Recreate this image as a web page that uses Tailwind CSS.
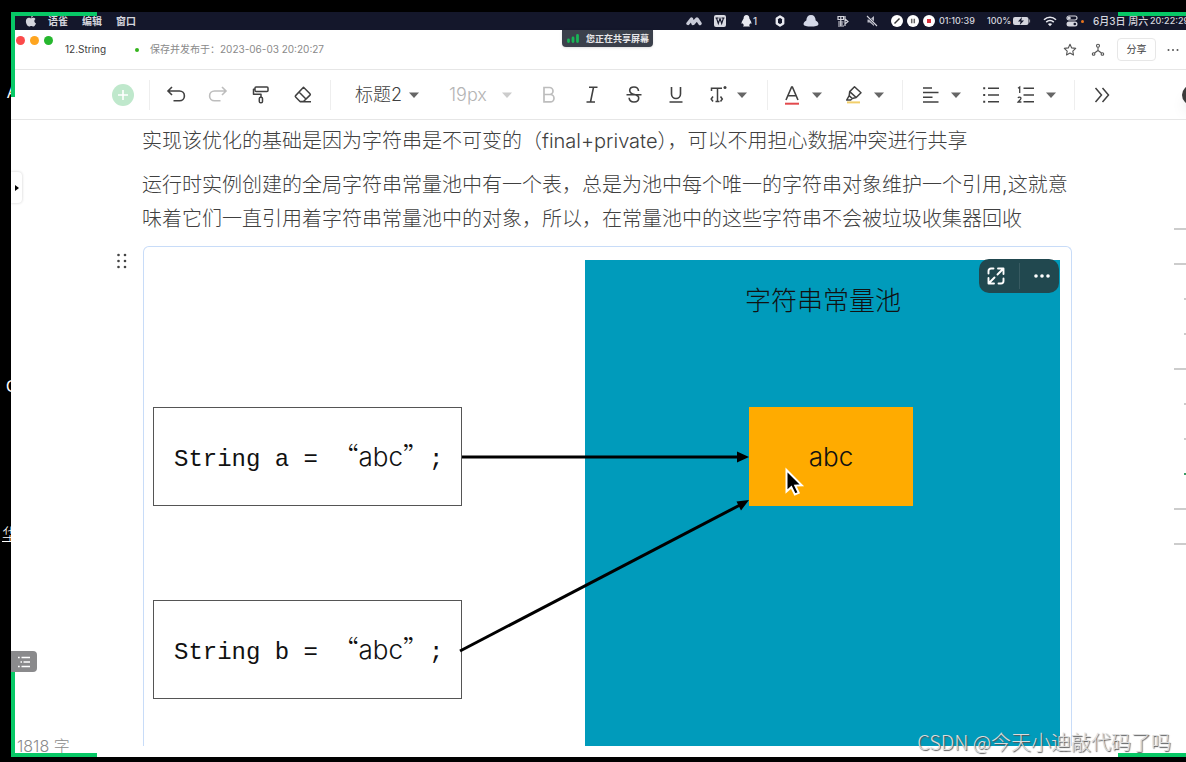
<!DOCTYPE html>
<html lang="zh-CN">
<head>
<meta charset="utf-8">
<title>12.String</title>
<script src="https://cdn.jsdelivr.net/npm/@tailwindcss/browser@4"></script>
</head>
<body class="relative flex h-screen flex-col overflow-hidden bg-black pt-3 pr-0 pb-[5px] pl-[11px] font-['Inter','Noto_Sans_CJK_SC',sans-serif] text-[#404040]">

<!-- page behind the shared screen -->
<div class="absolute inset-y-0 left-0 w-[11px] overflow-hidden whitespace-nowrap font-['Liberation_Sans','Noto_Sans_CJK_SC',sans-serif] text-base leading-4 text-white">
  <span class="absolute top-[85px] left-[7px]">A</span>
  <span class="absolute top-[379px] left-[6px]">C</span>
  <a href="#" class="absolute top-[527px] left-[2px] text-base leading-4 font-light underline">华</a>
</div>

<!-- menu bar -->
<header class="flex h-[18px] shrink-0 items-center overflow-hidden bg-[#14172b] pl-3.5 text-[10px] font-semibold whitespace-nowrap text-[#d4d5dd]">
  <svg class="size-3 shrink-0" viewBox="0 0 12 12" fill="currentColor"><path d="M8 .5C7.900 1.800 7 2.700 5.900 2.700 5.900 1.500 6.800.7 8 .5zM6 3.300c.6 0 1.200-.5 2.300-.5.9 0 1.700.5 2.200 1.200C8.700 5 9 7.600 11 8.400c-.6 1.500-1.500 3-2.600 3-.8 0-1.200-.5-2.100-.5s-1.300.5-2.100.5C2.500 11.400.9 8.700.9 6.200c0-2.200 1.400-3.400 2.900-3.400 1 0 1.600.5 2.200.5z"/></svg>
  <nav class="ml-[11px] flex gap-3.5"><a href="#" class="w-5">语雀</a><a href="#" class="w-5">编辑</a><a href="#" class="w-5">窗口</a></nav>
  <div class="ml-auto flex w-[500px] shrink-0 items-center">
    <svg class="h-3 w-4 shrink-0" viewBox="0 0 16 12"><path d="M2 8.500 5.500 4 7 8.500 11 4l3 4.500" fill="none" stroke="#c9cbd8" stroke-width="3.400" stroke-linecap="round" stroke-linejoin="round"/></svg>
    <svg class="ml-3 size-3 shrink-0" viewBox="0 0 12 12"><rect width="12" height="12" rx="2" fill="#d9dae2"/><path d="M1.500 3h3M7.500 3h3M2.500 3l1.800 5.500L6 3.500l1.700 5L9.500 3" fill="none" stroke="#14172b" stroke-width="1.100"/></svg>
    <svg class="ml-[15px] h-3 w-[11px] shrink-0" viewBox="0 0 11 12" fill="#e8e9f0"><path d="M5.500 0C3.500 0 2.600 1.500 2.600 3.500 1.500 5.500.3 7 .6 9l1.200-.8c.2.800.6 1.300 1.100 1.800L2 11.500h7L8.100 10c.5-.5.900-1 1.100-1.800l1.200.8c.3-2-.9-3.500-2-5.500C8.400 1.500 7.500 0 5.500 0z"/></svg>
    <span class="w-[22px] shrink-0 pl-px font-medium">1</span>
    <svg class="size-3 shrink-0" viewBox="0 0 12 12"><path d="M6 1.500 9.200 3.500v5L6 10.500 2.800 8.500v-5z" fill="#14172b" stroke="#e8e9f0" stroke-width="2.400" stroke-linejoin="round"/></svg>
    <svg class="ml-[17px] h-3 w-4 shrink-0" viewBox="0 0 16 12"><path d="M8 0c3 0 4.500 2 4.700 5.500C15 7 15.600 8 15.400 9.500 15 11 12 11.500 8 11.500S1 11 .6 9.500C.4 8 1 7 3.300 5.500 3.500 2 5 0 8 0z" fill="#d4d8e8"/></svg>
    <svg class="ml-[18px] size-3 shrink-0" viewBox="0 0 12 12" fill="none" stroke="#d5d6de" stroke-width="1.200"><path d="M1 1.500h5.500v3H1zM1 7h5.500M1 9h5M1 11h6M3.800 1.500V11M8 1v10M8 4l3 2.500L8 9"/></svg>
    <svg class="ml-[17px] size-3 shrink-0" viewBox="0 0 12 12"><path d="M1.500 4.500h2.300L8 1v10L3.800 7.500H1.500z" fill="#b9bac6"/><path d="M1 1l10 10" stroke="#14172b" stroke-width="2.400"/><path d="M1 1l10 10" stroke="#d5d6de" stroke-width="1.100"/></svg>
    <svg class="ml-[13px] size-3 shrink-0" viewBox="0 0 12 12"><circle cx="6" cy="6" r="6" fill="#fff"/><path d="M3.500 8.500l5-5" stroke="#333" stroke-width="1.400"/></svg>
    <svg class="ml-1 size-3 shrink-0" viewBox="0 0 12 12"><circle cx="6" cy="6" r="6" fill="#fff"/><path d="M4.700 3.700v4.600M7.300 3.700v4.600" stroke="#666" stroke-width="1.500"/></svg>
    <svg class="ml-1 size-3 shrink-0" viewBox="0 0 12 12"><circle cx="6" cy="6" r="6" fill="#fff"/><rect x="4" y="4" width="4" height="4" fill="#d8303c"/></svg>
    <span class="ml-1 w-12 shrink-0 text-[9px] font-medium">01:10:39</span>
    <span class="w-[26px] shrink-0 text-[9px] font-medium">100%</span>
    <svg class="h-2 w-[18px] shrink-0" viewBox="0 0 18 8"><rect width="15.500" height="8" rx="2" fill="#d5d6de"/><path d="M16.500 2.500v3" stroke="#8d8f9c" stroke-width="1.200"/><path d="M9 0 5 4.500h2.500L6.800 8 11 3.500H8.300z" fill="#14172b"/></svg>
    <svg class="ml-3 h-3 w-3.5 shrink-0" viewBox="0 0 14 12" fill="none" stroke="#e8e9f0" stroke-width="1.600"><path d="M1 4.800c3.500-3.400 8.500-3.400 12 0M3.200 7.100c2.200-2 5.400-2 7.600 0"/><path d="M7 11.200 4.900 9c1.200-1 3-1 4.200 0z" fill="#e8e9f0" stroke="none"/></svg>
    <svg class="ml-[9px] h-3 w-3 shrink-0" viewBox="0 0 12 12"><rect x="1" y="1" width="10" height="4" rx="2" fill="none" stroke="#d5d6de" stroke-width="1.200"/><circle cx="3.200" cy="3" r="1.600" fill="#d5d6de"/><rect x=".5" y="6.500" width="11" height="5" rx="2.500" fill="#d5d6de"/><circle cx="8.800" cy="9" r="1.300" fill="#14172b"/></svg>
    <span class="ml-[3px] size-[3px] shrink-0 rounded-full bg-[#e8741c]"></span>
    <span class="ml-[9px] w-[57px] shrink-0 font-medium">6月3日 周六</span>
    <span class="shrink-0 text-[9px] font-medium">20:22:29</span>
  </div>
</header>

<!-- sharing notice -->
<div class="absolute top-[30px] left-[562px] flex h-[17px] w-[91px] items-center gap-[7px] rounded-b-sm bg-[#3b404b] pl-[5px] text-[9px] font-semibold whitespace-nowrap text-[#e6e6e8] shadow">
  <svg class="h-[9px] w-3" viewBox="0 0 12 9" stroke="#18b556" stroke-width="2.800" stroke-linecap="round"><path d="M1.500 6v1.500M6 4v3.500M10.500 1.500v6"/></svg>
  您正在共享屏幕
</div>

<!-- title bar -->
<div class="flex h-10 shrink-0 items-center border-b border-[#e6e6e6] bg-white pl-[5px] text-[10px] whitespace-nowrap">
  <div class="mb-[19px] flex gap-[5px]">
    <span class="size-[9px] rounded-full bg-[#fb4a4a]"></span>
    <span class="size-[9px] rounded-full bg-[#fea520]"></span>
    <span class="size-[9px] rounded-full bg-[#26b72e]"></span>
  </div>
  <h1 class="ml-3 w-[70px]">12.String</h1>
  <span class="size-1 rounded-full bg-[#35b41d]"></span>
  <span class="ml-[11px] text-[#8a8a8a]">保存并发布于：2023-06-03 20:20:27</span>
  <div class="ml-auto flex items-center pr-[7px]">
    <button aria-label="收藏"><svg class="size-3.5" viewBox="0 0 14 14" fill="none" stroke="#555" stroke-width="1.100" stroke-linejoin="round"><path d="M7 1.300l1.700 3.600 4 .5-2.900 2.700.7 3.900L7 10.100 3.500 12l.7-3.900L1.300 5.400l4-.5z"/></svg></button>
    <button aria-label="协作" class="ml-3.5"><svg class="size-3.5" viewBox="0 0 14 14" fill="none" stroke="#555" stroke-width="1.100"><circle cx="7" cy="2.800" r="1.500"/><circle cx="2.600" cy="11" r="1.300"/><circle cx="11.400" cy="11" r="1.300"/><path d="M7 4.300v3.200M3.500 10 7 7.500l3.500 2.500"/></svg></button>
    <button class="ml-3 h-[23px] w-[39px] rounded-sm border border-[#e7e7e7]">分享</button>
    <button aria-label="更多" class="ml-[11px]"><svg class="h-3 w-3" viewBox="0 0 12 12" fill="#555"><circle cx="1.500" cy="6" r="1"/><circle cx="6" cy="6" r="1"/><circle cx="10.500" cy="6" r="1"/></svg></button>
  </div>
</div>

<!-- editing toolbar -->
<div class="flex h-[50px] shrink-0 items-center overflow-hidden border-b border-[#e6e6e6] bg-white pl-[101px] whitespace-nowrap text-[#404040]">
  <button aria-label="插入" class="flex size-[22px] shrink-0 items-center justify-center rounded-full bg-[#bfe8cc]"><svg class="size-3" viewBox="0 0 12 12" stroke="#fff" stroke-width="1.600"><path d="M6 1v10M1 6h10"/></svg></button>
  <span class="ml-[15px] h-[30px] w-px bg-[#eee]"></span>
  <button aria-label="撤销" class="ml-3.5"><svg class="size-6" viewBox="0 0 24 24" fill="none" stroke="currentColor" stroke-width="1.600"><path d="M8 4 4 8l4 4M4 8h11.500a4.700 4.700 0 0 1 0 9.800H9.500"/></svg></button>
  <button aria-label="重做" class="ml-[18px] text-[#bdbdbd]"><svg class="size-6" viewBox="0 0 24 24" fill="none" stroke="currentColor" stroke-width="1.600"><path d="M16 4l4 4-4 4M20 8H8.500a4.700 4.700 0 0 0 0 9.800h6"/></svg></button>
  <button aria-label="格式刷" class="ml-[19px]"><svg class="size-6" viewBox="0 0 24 24" fill="none" stroke="currentColor" stroke-width="1.500" stroke-linejoin="round"><rect x="6" y="4" width="13" height="4.600" rx="1"/><path d="M6 6.300H4.500v4.900H12v3"/><rect x="10.300" y="14.200" width="3.200" height="5.600" rx="1.400"/></svg></button>
  <button aria-label="清除格式" class="ml-[18px]"><svg class="size-6" viewBox="0 0 24 24" fill="none" stroke="currentColor" stroke-width="1.500" stroke-linejoin="round"><path d="M12.500 4.200 19 10.700a1 1 0 0 1 0 1.400L12.500 18.500H9L4.600 14a1 1 0 0 1 0-1.400zM8 9l6.700 6.700M9 18.700h11"/></svg></button>
  <span class="ml-[15px] h-[30px] w-px bg-[#eee]"></span>
  <label class="ml-6 flex items-center"><select aria-label="正文样式" class="w-[54px] appearance-none text-[18px] leading-6 font-light"><option>标题2</option></select><svg class="h-1.5 w-2.5" viewBox="0 0 10 6" fill="#666"><path d="M0 .5h10L5 6z"/></svg></label>
  <label class="ml-[30px] flex items-center text-[#b4b4b4]"><select aria-label="字号" class="w-[53px] appearance-none text-[18px] leading-6 font-light"><option>19px</option></select><svg class="h-1.5 w-2.5" viewBox="0 0 10 6" fill="#ccc"><path d="M0 .5h10L5 6z"/></svg></label>
  <button aria-label="粗体" class="ml-[25px] text-[#bdbdbd]"><svg class="size-6" viewBox="0 0 24 24" fill="none" stroke="currentColor" stroke-width="1.700"><path d="M7 4.500h5.500a3.500 3.500 0 0 1 0 7H7zM7 11.500h6.300a3.700 3.700 0 0 1 0 7.400H7z"/></svg></button>
  <button aria-label="斜体" class="ml-[19px]"><svg class="size-6" viewBox="0 0 24 24" fill="none" stroke="currentColor" stroke-width="1.600"><path d="M9 4.300h8.500M6.500 19H15M13.500 4.300 10.500 19"/></svg></button>
  <button aria-label="删除线" class="ml-[18px]"><svg class="size-6" viewBox="0 0 24 24" fill="none" stroke="currentColor" stroke-width="1.600"><path d="M16.500 8c-.2-2.500-2-4-4.500-4S7.700 5.300 7.700 7.500c0 5.400 9 2.800 9 7.500 0 2.500-2 4-4.700 4s-4.700-1.500-4.900-4.200M4.500 11.700h15"/></svg></button>
  <button aria-label="下划线" class="ml-[18px]"><svg class="size-6" viewBox="0 0 24 24" fill="none" stroke="currentColor" stroke-width="1.600"><path d="M7.500 4v7a4.500 4.500 0 0 0 9 0V4M5.500 19h13"/></svg></button>
  <button aria-label="更多文本样式" class="ml-[18px] flex items-center gap-[7px]"><svg class="size-6" viewBox="0 0 24 24" fill="none" stroke="currentColor" stroke-width="1.500"><path d="M5.500 8V5.300h10.500M11.500 5.300v13M9.500 18.500h4M7 13.500l-1.800 2.500L7 18.500M14.500 13.500l1.800 2.500-1.800 2.500"/><circle cx="19" cy="4.500" r="1.500" fill="currentColor" stroke="none"/></svg><svg class="h-1.5 w-2.5" viewBox="0 0 10 6" fill="#666"><path d="M0 .5h10L5 6z"/></svg></button>
  <span class="ml-5 h-[30px] w-px bg-[#eee]"></span>
  <button aria-label="字体颜色" class="ml-3 flex items-center gap-2"><svg class="size-6" viewBox="0 0 24 24" fill="none" stroke="currentColor" stroke-width="1.600"><path d="M6 17 11.600 4h.8L18 17M8 12.700h8"/><path d="M5 20.700h14" stroke="#e2494d" stroke-width="2"/></svg><svg class="h-1.5 w-2.5" viewBox="0 0 10 6" fill="#666"><path d="M0 .5h10L5 6z"/></svg></button>
  <button aria-label="背景颜色" class="ml-5 flex items-center gap-2"><svg class="size-6" viewBox="0 0 24 24" fill="none" stroke="currentColor" stroke-width="1.500" stroke-linejoin="round"><path d="M12.500 3.800 19 9.800l-4.800 4.700-6.500-5.900zM7.700 8.600l-.5 4 3 2.900 4-1M7.200 12.600 4.700 17h4l1.500-1.500"/><path d="M5 19.400h13" stroke="#f2cf6b" stroke-width="2"/></svg><svg class="h-1.5 w-2.5" viewBox="0 0 10 6" fill="#666"><path d="M0 .5h10L5 6z"/></svg></button>
  <span class="ml-[18px] h-[30px] w-px bg-[#eee]"></span>
  <button aria-label="对齐" class="ml-4 flex items-center gap-2"><svg class="size-6" viewBox="0 0 24 24" fill="none" stroke="currentColor" stroke-width="1.500"><path d="M4 5h9M4 9.500h15.500M4 14.200h9.500M4 19h15.500"/></svg><svg class="h-1.5 w-2.5" viewBox="0 0 10 6" fill="#666"><path d="M0 .5h10L5 6z"/></svg></button>
  <button aria-label="无序列表" class="ml-[18px]"><svg class="size-6" viewBox="0 0 24 24" fill="none" stroke="currentColor" stroke-width="1.500"><path d="M9 5.200h11M9 12h11M9 18.700h11"/><path d="M4.200 5.200h2M4.200 12h2M4.200 18.700h2" stroke-width="2"/></svg></button>
  <button aria-label="有序列表" class="ml-[11px] flex items-center gap-2"><svg class="size-6" viewBox="0 0 24 24" fill="none" stroke="currentColor" stroke-width="1.500"><path d="M9.500 5.200H20M9.500 12H20M9.500 18.700H20"/><path d="M4 5.200 5.700 4v6M4 15c.5-1.200 3-1.200 3 .3 0 1.300-2 2.200-3 3.700h3.400" stroke-width="1.300"/></svg><svg class="h-1.5 w-2.5" viewBox="0 0 10 6" fill="#666"><path d="M0 .5h10L5 6z"/></svg></button>
  <span class="ml-[18px] h-[30px] w-px bg-[#eee]"></span>
  <button aria-label="展开" class="ml-[15px]"><svg class="size-6" viewBox="0 0 24 24" fill="none" stroke="currentColor" stroke-width="1.500"><path d="M5.500 5l6 7-6 7M12.500 5l6 7-6 7"/></svg></button>
  <button aria-label="助手" class="ml-auto -mr-4 size-5 shrink-0 rounded-full bg-[#3b3b3b] shadow-lg"></button>
</div>

<!-- document -->
<main class="flex min-h-0 flex-1 overflow-hidden bg-white">
  <aside class="flex w-[131px] shrink-0 flex-col">
    <button aria-label="展开目录" class="mt-[52px] flex h-[31px] w-[11px] items-center rounded-r-sm bg-white pl-1 shadow-[0_0_3px_rgba(0,0,0,0.2)]"><svg class="h-1.5 w-1" viewBox="0 0 4 6"><path d="M0 0l4 3-4 3z"/></svg></button>
    <button aria-label="拖动" class="mt-[50px] ml-[105px] w-3"><svg class="h-4 w-3" viewBox="0 0 12 16" fill="#444"><circle cx="2.500" cy="2" r="1.300"/><circle cx="9" cy="2" r="1.300"/><circle cx="2.500" cy="8" r="1.300"/><circle cx="9" cy="8" r="1.300"/><circle cx="2.500" cy="14" r="1.300"/><circle cx="9" cy="14" r="1.300"/></svg></button>
  </aside>
  <article class="flex w-[930px] shrink-0 flex-col overflow-hidden pb-[11px]">
    <p class="mt-1 text-[20px] leading-[34px] font-light">实现该优化的基础是因为字符串是不可变的（final+private），可以不用担心数据冲突进行共享</p>
    <p class="mt-2.5 text-[20px] leading-[34px] font-light">运行时实例创建的全局字符串常量池中有一个表，总是为池中每个唯一的字符串对象维护一个引用,这就意味着它们一直引用着字符串常量池中的对象，所以，在常量池中的这些字符串不会被垃圾收集器回收</p>
    <figure class="relative mt-2.5 ml-px min-h-0 flex-1 overflow-hidden rounded-t-md border border-b-0 border-[#c8dcf8]">
      <svg class="h-[499px] w-[927px]" viewBox="144 247 927 499" font-family="Inter, 'Noto Sans CJK SC', sans-serif" font-size="26" font-weight="300" fill="#111">
        <rect x="585" y="260" width="475" height="486" fill="#009bbb"/>
        <rect x="153.500" y="407.500" width="308" height="98" fill="#fff" stroke="#555"/>
        <rect x="153.500" y="600.500" width="308" height="98" fill="#fff" stroke="#555"/>
        <rect x="749" y="407" width="164" height="99" fill="#ffab00"/>
        <g stroke="#000" stroke-width="3"><path d="M462 457h277"/><path d="M460 651 740 505"/></g>
        <path d="M737 451.500 749 457l-12 5.500zM736.500 501.500 749 500l-8 10.500z" fill="#000"/>
        <text x="823" y="310" text-anchor="middle" font-family="'Noto Sans CJK SC', sans-serif">字符串常量池</text>
        <text x="831" y="466" text-anchor="middle">abc</text>
        <text x="174" y="466" xml:space="preserve"><tspan font-family="'Liberation Mono', monospace" font-size="24">String a = </tspan><tspan font-family="'Noto Sans CJK SC', sans-serif">“</tspan>abc<tspan font-family="'Noto Sans CJK SC', sans-serif">”</tspan><tspan font-family="'Liberation Mono', monospace" font-size="24">;</tspan></text>
        <text x="174" y="659" xml:space="preserve"><tspan font-family="'Liberation Mono', monospace" font-size="24">String b = </tspan><tspan font-family="'Noto Sans CJK SC', sans-serif">“</tspan>abc<tspan font-family="'Noto Sans CJK SC', sans-serif">”</tspan><tspan font-family="'Liberation Mono', monospace" font-size="24">;</tspan></text>
        <path d="M786.500 470v21.500l4.800-4.300 3.600 7.300 3.800-1.700-3.400-7.200 6.500-.3z" fill="#000" stroke="#fff" stroke-width="2"/>
      </svg>
      <div class="absolute top-3 right-3 flex h-[34px] w-20 items-center rounded-[10px] bg-[#21484f] text-white">
        <button aria-label="全屏" class="flex h-full w-10 items-center pl-2"><svg class="size-[18px]" viewBox="0 0 18 18" fill="none" stroke="currentColor" stroke-width="1.900" stroke-linecap="round" stroke-linejoin="round"><path d="M6.500 1.500H4a2.500 2.500 0 0 0-2.500 2.500v2.500M11.500 16.500H14a2.500 2.500 0 0 0 2.500-2.500v-2.500M11 1.500h5.500V7M16 2l-5.500 5.500M7 16.500H1.500V11M2 16l5.500-5.500"/></svg></button>
        <span class="h-[26px] w-px bg-white/10"></span>
        <button aria-label="更多操作" class="flex h-full flex-1 items-center justify-center pl-1"><svg class="h-1 w-4" viewBox="0 0 16 4" fill="currentColor"><circle cx="2" cy="2" r="1.800"/><circle cx="8" cy="2" r="1.800"/><circle cx="14" cy="2" r="1.800"/></svg></button>
      </div>
    </figure>
  </article>
  <nav aria-label="大纲" class="mt-[108px] ml-auto flex flex-col items-end gap-[33px]">
    <a href="#" class="h-0.5 w-3 bg-[#ccc]"></a><a href="#" class="h-0.5 w-3 bg-[#ccc]"></a><a href="#" class="h-0.5 w-0.5 bg-[#ccc]"></a><a href="#" class="h-0.5 w-0.5 bg-[#ccc]"></a><a href="#" class="h-0.5 w-3 bg-[#ccc]"></a><a href="#" class="h-0.5 w-0.5 bg-[#ccc]"></a><a href="#" class="h-0.5 w-0.5 bg-[#ccc]"></a><a href="#" class="h-0.5 w-0.5 bg-[#3a9d66]"></a><a href="#" class="h-0.5 w-3 bg-[#ccc]"></a><a href="#" class="h-0.5 w-3 bg-[#ccc]"></a>
  </nav>
</main>

<!-- floating pieces -->
<span class="absolute bottom-[7px] left-[17px] text-base leading-[18px] font-light text-[#8a8a8a]">1818 字</span>
<div class="absolute top-3 left-[11px] h-[85px] w-[86px] border-t-4 border-l-4 border-[#07c866]"></div>
<div class="absolute top-3 right-0 h-1 w-[68px] bg-[#07c866]"></div>
<div class="absolute bottom-[5px] left-[11px] h-[85px] w-[86px] border-b-4 border-l-4 border-[#07c866]"></div>
<div class="absolute right-0 bottom-[5px] h-1 w-[68px] bg-[#07c866]"></div>
<button aria-label="大纲" class="absolute bottom-[90px] left-[11px] flex h-[21px] w-[26px] items-center justify-center rounded-r-sm bg-[#8a8a8c]"><svg class="size-3" viewBox="0 0 12 12" stroke="#fff" stroke-width="1.600"><path d="M3.500 1.500H12M5.500 6H12M3.500 10.500H12M0 1.500h1.700M2.500 6h1.500M0 10.500h1.700"/></svg></button>
<span class="absolute right-[15px] bottom-[6px] font-['Noto_Sans_CJK_SC',sans-serif] text-[20px] leading-7 font-light whitespace-nowrap text-[#dcdcdc] [text-shadow:1px_1px_1px_#555]">CSDN @今天小迪敲代码了吗</span>
</body>
</html>
